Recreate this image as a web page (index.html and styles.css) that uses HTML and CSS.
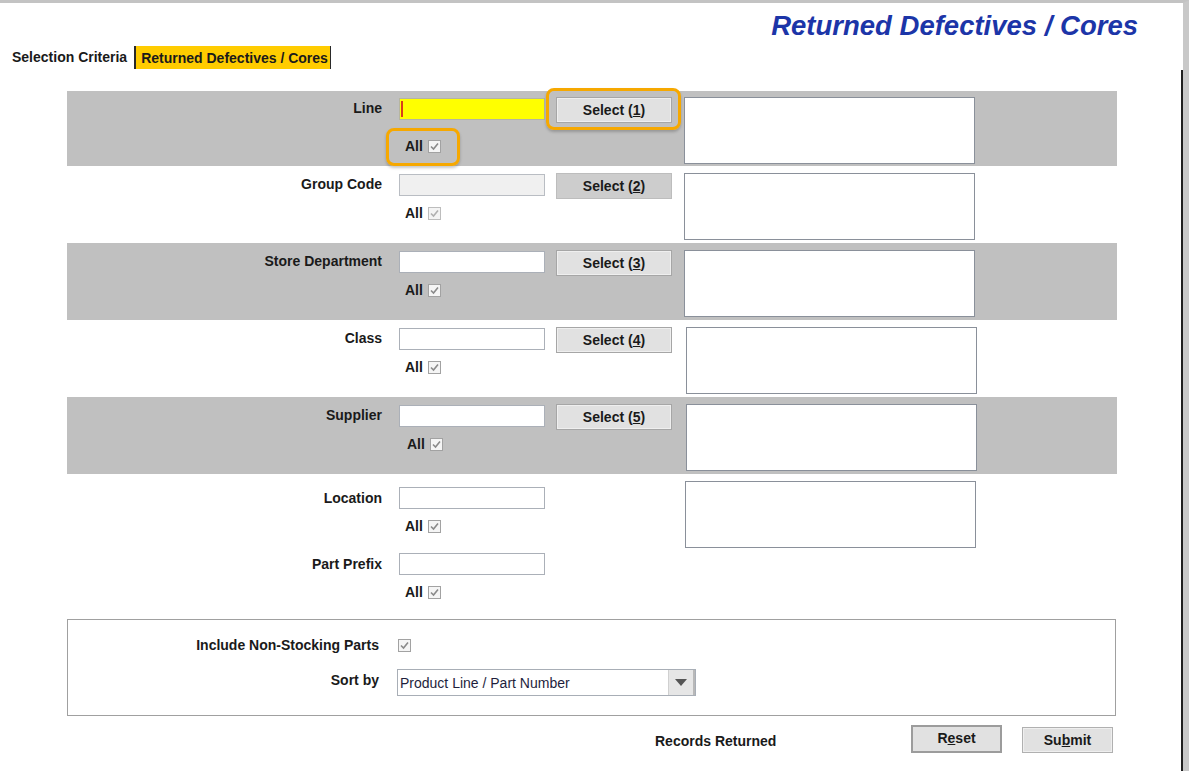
FILE: index.html
```html
<!DOCTYPE html>
<html>
<head>
<meta charset="utf-8">
<title>Returned Defectives / Cores</title>
<link rel="stylesheet" href="styles.css">
</head>
<body>
<div class="frame">
  <div class="header"><h1 class="title">Returned Defectives / Cores</h1></div>
  <div class="tabs">
    <span class="tab">Selection Criteria</span>
    <span class="tab tab-active">Returned Defectives / Cores</span>
  </div>
  <div class="panel">
    <div class="form">
      <div class="row gray first">
        <div class="lbl">Line</div>
        <div class="fieldcol">
          <div class="input focus"><span class="caret"></span></div>
          <div class="all hl hl-all">All <svg class="cb" width="13" height="13" viewBox="0 0 13 13"><rect x="0.5" y="0.5" width="12" height="12" fill="#f5f5f5" stroke="#a2a2a2"/><path d="M3 6.5 L5.5 9 L10 3.5" fill="none" stroke="#8a8a8a" stroke-width="1.6"/></svg></div>
        </div>
        <div class="btn hl hl-btn">Select (<u>1</u>)</div>
        <div class="list"></div>
      </div>
      <div class="row">
        <div class="lbl">Group Code</div>
        <div class="fieldcol">
          <div class="input disabled"></div>
          <div class="all">All <svg class="cb" width="13" height="13" viewBox="0 0 13 13"><rect x="0.5" y="0.5" width="12" height="12" fill="#f4f4f4" stroke="#bdbdbd"/><path d="M3 6.5 L5.5 9 L10 3.5" fill="none" stroke="#b0b0b0" stroke-width="1.6"/></svg></div>
        </div>
        <div class="btn btn-dis">Select (<u>2</u>)</div>
        <div class="list"></div>
      </div>
      <div class="row gray">
        <div class="lbl">Store Department</div>
        <div class="fieldcol">
          <div class="input"></div>
          <div class="all">All <svg class="cb" width="13" height="13" viewBox="0 0 13 13"><rect x="0.5" y="0.5" width="12" height="12" fill="#f5f5f5" stroke="#a2a2a2"/><path d="M3 6.5 L5.5 9 L10 3.5" fill="none" stroke="#8a8a8a" stroke-width="1.6"/></svg></div>
        </div>
        <div class="btn">Select (<u>3</u>)</div>
        <div class="list"></div>
      </div>
      <div class="row">
        <div class="lbl">Class</div>
        <div class="fieldcol">
          <div class="input"></div>
          <div class="all">All <svg class="cb" width="13" height="13" viewBox="0 0 13 13"><rect x="0.5" y="0.5" width="12" height="12" fill="#f5f5f5" stroke="#a2a2a2"/><path d="M3 6.5 L5.5 9 L10 3.5" fill="none" stroke="#8a8a8a" stroke-width="1.6"/></svg></div>
        </div>
        <div class="btn">Select (<u>4</u>)</div>
        <div class="list list-shift"></div>
      </div>
      <div class="row gray">
        <div class="lbl">Supplier</div>
        <div class="fieldcol">
          <div class="input"></div>
          <div class="all all-shift">All <svg class="cb" width="13" height="13" viewBox="0 0 13 13"><rect x="0.5" y="0.5" width="12" height="12" fill="#f5f5f5" stroke="#a2a2a2"/><path d="M3 6.5 L5.5 9 L10 3.5" fill="none" stroke="#8a8a8a" stroke-width="1.6"/></svg></div>
        </div>
        <div class="btn">Select (<u>5</u>)</div>
        <div class="list list-shift"></div>
      </div>
      <div class="row row-last">
        <div class="stack">
          <div class="sub sub-first">
            <div class="lbl">Location</div>
            <div class="fieldcol">
              <div class="input"></div>
              <div class="all">All <svg class="cb" width="13" height="13" viewBox="0 0 13 13"><rect x="0.5" y="0.5" width="12" height="12" fill="#f5f5f5" stroke="#a2a2a2"/><path d="M3 6.5 L5.5 9 L10 3.5" fill="none" stroke="#8a8a8a" stroke-width="1.6"/></svg></div>
            </div>
          </div>
          <div class="sub sub-second">
            <div class="lbl">Part Prefix</div>
            <div class="fieldcol">
              <div class="input"></div>
              <div class="all">All <svg class="cb" width="13" height="13" viewBox="0 0 13 13"><rect x="0.5" y="0.5" width="12" height="12" fill="#f5f5f5" stroke="#a2a2a2"/><path d="M3 6.5 L5.5 9 L10 3.5" fill="none" stroke="#8a8a8a" stroke-width="1.6"/></svg></div>
            </div>
          </div>
        </div>
        <div class="list list-loc"></div>
      </div>
      <div class="box">
        <div class="opt-row">
          <div class="opt-lbl">Include Non-Stocking Parts</div>
          <svg class="cb opt-cb" width="13" height="13" viewBox="0 0 13 13"><rect x="0.5" y="0.5" width="12" height="12" fill="#f5f5f5" stroke="#a2a2a2"/><path d="M3 6.5 L5.5 9 L10 3.5" fill="none" stroke="#8a8a8a" stroke-width="1.6"/></svg>
        </div>
        <div class="sort-row">
          <div class="opt-lbl sort-lbl">Sort by</div>
          <div class="select">
            <span class="select-text">Product Line / Part Number</span>
            <span class="arrow"><svg width="12" height="7" viewBox="0 0 12 7"><path d="M0 0 H12 L6 7 Z" fill="#555"/></svg></span>
          </div>
        </div>
      </div>
      <div class="footer">
        <div class="records">Records Returned</div>
        <div class="fbtn reset">R<u>e</u>set</div>
        <div class="fbtn submit">Su<u>b</u>mit</div>
      </div>
    </div>
  </div>
</div>
</body>
</html>
```

FILE: styles.css
```css
* { box-sizing: border-box; }

body {
  margin: 0;
  font-family: "Liberation Sans", Arial, sans-serif;
  color: #1a1a1a;
  background: #fff;
}

.frame {
  width: 1189px;
  height: 771px;
  border-top: 3px solid #c3c3c3;
  border-right: 6px solid #c8c8c8;
  display: flex;
  flex-direction: column;
  overflow: hidden;
  background: #fff;
}

.header {
  height: 41px;
  padding: 8px 45px 0 0;
  display: flex;
  justify-content: flex-end;
}

.title {
  margin: 0;
  font-size: 27.5px;
  line-height: 30px;
  font-weight: bold;
  font-style: italic;
  color: #1c35a8;
}

.tabs {
  height: 26px;
  display: flex;
  align-items: center;
  padding-left: 12px;
  font-size: 14px;
  font-weight: bold;
}

.tab-active {
  margin-left: 7px;
  height: 23px;
  line-height: 25px;
  padding: 0 2px 0 5px;
  background: #ffcc00;
  border-left: 2px solid #2a2a2a;
  border-right: 1px solid #2a2a2a;
}

.panel {
  flex: 1;
  border-right: 2px solid #1f1f1f;
  padding-top: 21px;
}

.form {
  margin-left: 67px;
  width: 1050px;
}

.row {
  display: flex;
  align-items: flex-start;
  height: 77px;
  padding-top: 7px;
}

.row.first { height: 75px; padding-top: 6px; }
.row.gray { background: #c0c0c0; }

.lbl {
  width: 315px;
  flex: none;
  text-align: right;
  font-size: 14px;
  font-weight: bold;
  line-height: 16px;
  margin-top: 3px;
}

.fieldcol {
  width: 146px;
  flex: none;
  margin-left: 17px;
  margin-top: 1px;
}

.input {
  height: 22px;
  border: 1px solid #abb0b8;
  background: #fff;
}

.input.focus {
  background: #ffff00;
  border-color: #b5b5a0;
  padding: 2px 0 0 1px;
}

.caret {
  display: block;
  width: 2px;
  height: 16px;
  background: #d8401a;
}

.input.disabled {
  background: #f0f0f0;
  border-color: #b9bdc3;
}

.all {
  display: flex;
  align-items: center;
  gap: 5px;
  width: max-content;
  height: 16px;
  margin-top: 9px;
  padding-left: 6px;
  font-size: 14px;
  font-weight: bold;
  line-height: 16px;
}

.all-shift { padding-left: 8px; }

.cb { display: block; flex: none; }

.hl { position: relative; }

.hl::after {
  content: "";
  position: absolute;
  border: 3px solid #f6a800;
  border-radius: 8px;
  box-shadow: 0 2px 3px rgba(0, 0, 0, 0.22);
  pointer-events: none;
}

.hl-all { margin-top: 18px; }
.hl-all::after { left: -13px; right: -19px; top: -10px; bottom: -12px; }

.btn {
  flex: none;
  margin-left: 11px;
  width: 116px;
  height: 26px;
  display: flex;
  align-items: center;
  justify-content: center;
  background: #e1e1e1;
  border: 1px solid #a6a6a6;
  box-shadow: inset 0 0 0 1px #efefef;
  font-size: 14px;
  font-weight: bold;
}

.hl-btn::after { left: -11px; right: -10px; top: -10px; bottom: -8px; }

.btn-dis {
  background: #cdcdcd;
  border-color: #bdbdbd;
  box-shadow: none;
}

.list {
  flex: none;
  margin-left: 12px;
  width: 291px;
  height: 67px;
  background: #fff;
  border: 1px solid #8a909a;
}

.list-shift { margin-left: 14px; }

.row-last { height: 145px; }

.stack { width: 478px; flex: none; }

.sub { display: flex; align-items: flex-start; }
.sub .fieldcol { margin-top: 0; }
.sub-first { margin-top: 6px; }
.sub-second { margin-top: 19px; }

.list-loc { margin-left: 140px; }

.box {
  width: 1049px;
  height: 97px;
  border: 1px solid #a0a0a0;
  padding-top: 17px;
}

.opt-row {
  display: flex;
  align-items: center;
  height: 16px;
}

.opt-lbl {
  width: 311px;
  flex: none;
  text-align: right;
  font-size: 14px;
  font-weight: bold;
  line-height: 16px;
}

.opt-cb { margin-left: 19px; }

.sort-row {
  display: flex;
  align-items: flex-start;
  margin-top: 16px;
}

.sort-lbl { margin-top: 3px; }

.select {
  margin-left: 18px;
  width: 299px;
  height: 27px;
  display: flex;
  align-items: center;
  border: 1px solid #a8aeb6;
  background: #fff;
  padding-left: 2px;
  font-size: 14px;
  color: #1e1e3c;
}

.arrow {
  margin-left: auto;
  width: 27px;
  height: 25px;
  display: flex;
  align-items: center;
  justify-content: center;
  background: #e6e6e6;
  border-left: 1px solid #d0d0d0;
  border-right: 2px solid #b8b8b8;
}

.footer {
  display: flex;
  align-items: flex-start;
  padding-top: 9px;
  padding-left: 588px;
}

.records {
  width: 256px;
  margin-top: 8px;
  font-size: 14px;
  font-weight: bold;
  line-height: 16px;
}

.fbtn {
  width: 91px;
  display: flex;
  align-items: center;
  justify-content: center;
  background: #e1e1e1;
  font-size: 14px;
  font-weight: bold;
}

.reset {
  height: 28px;
  border: 2px solid #9c9c9c;
  padding-bottom: 2px;
}

.submit {
  margin-left: 20px;
  margin-top: 2px;
  height: 26px;
  border: 1px solid #b0b0b0;
  box-shadow: inset 0 0 0 1px #efefef;
}
```
